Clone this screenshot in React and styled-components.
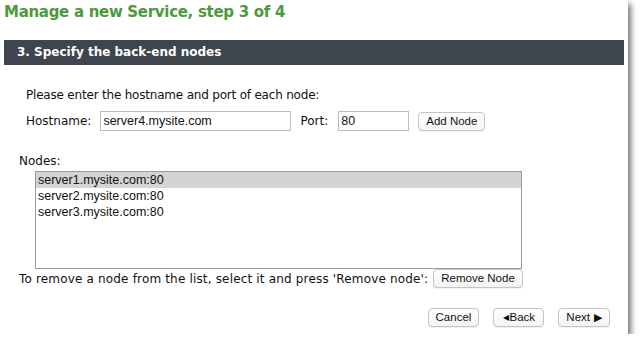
import styled, { createGlobalStyle } from 'styled-components';

const GlobalStyle = createGlobalStyle`
  body {
    margin: 0;
    background: #fff;
    font-family: "DejaVu Sans", Verdana, sans-serif;
  }
`;

const nodes = ['server1.mysite.com:80', 'server2.mysite.com:80', 'server3.mysite.com:80'];

const App = () => {
  return (
    <>
      <GlobalStyle />
      <Window>
        <Title>Manage a new Service, step 3 of 4</Title>
        <SectionBar>3. Specify the back-end nodes</SectionBar>
        <Intro>
          <Text $spacing={-0.2}>Please enter the hostname and port of each node:</Text>
          <InputRow>
            <Text>Hostname:</Text>
            <Field $width={191} defaultValue="server4.mysite.com" />
            <Text $right={1}>Port:</Text>
            <Field $width={71} defaultValue="80" />
            <Button>Add Node</Button>
          </InputRow>
        </Intro>
        <NodesLabel>Nodes:</NodesLabel>
        <NodeList>
          {nodes.map((node, i) => (
            <NodeItem key={node} $selected={i === 0}>{node}</NodeItem>
          ))}
        </NodeList>
        <RemoveRow>
          <Text $spacing={0.17}>To remove a node from the list, select it and press 'Remove node':</Text>
          <Button>Remove Node</Button>
        </RemoveRow>
        <Footer>
          <Button>Cancel</Button>
          <Button><Arrow>◀</Arrow>Back</Button>
          <Button>Next<Arrow $big>▶</Arrow></Button>
        </Footer>
      </Window>
    </>
  )
}

export default App;

const Window = styled.div`
  width: 628px;
  height: 334px;
  background: #fff;
  box-shadow: 3px 4px 6px rgba(0, 0, 0, 0.55);
  display: flex;
  flex-direction: column;
  overflow: hidden;
`;

const Title = styled.h1`
  margin: 0;
  padding: 2px 0 0 4px;
  height: 40px;
  box-sizing: border-box;
  color: #4b9a3c;
  font-family: "DejaVu Sans", Verdana, sans-serif;
  font-size: 15px;
  font-weight: 700;
  letter-spacing: -0.3px;
  line-height: 20px;
`;

const SectionBar = styled.div`
  margin: 0 4px;
  height: 25px;
  padding-left: 13px;
  background: #3e454c;
  color: #fff;
  font-family: "DejaVu Sans", Verdana, sans-serif;
  font-size: 12px;
  font-weight: 700;
  line-height: 25px;
`;

const Intro = styled.div`
  padding: 22px 0 0 26px;
  display: flex;
  flex-direction: column;
  gap: 8px;
`;

const Text = styled.span`
  color: #111;
  font-family: "DejaVu Sans", Verdana, sans-serif;
  font-size: 12px;
  line-height: 16px;
  letter-spacing: ${p => p.$spacing || 0}px;
  margin-right: ${p => p.$right || 0}px;
`;

const InputRow = styled.div`
  display: flex;
  align-items: center;
  gap: 9px;
`;

const Field = styled.input`
  width: ${p => p.$width}px;
  height: 20px;
  box-sizing: border-box;
  border: 1px solid #bdbdbd;
  padding: 0 2px;
  font-family: "Liberation Sans", Arial, sans-serif;
  font-size: 12.5px;
  color: #111;
  outline: none;
`;

const Button = styled.button`
  height: 19px;
  padding: 0 7px;
  border: 1px solid #c4c4c4;
  border-radius: 4px;
  background: linear-gradient(#fff, #f4f4f4);
  box-shadow: 0 1px 0 rgba(0, 0, 0, 0.05);
  font-family: "Liberation Sans", Arial, sans-serif;
  font-size: 11.5px;
  color: #111;
  line-height: 17px;
  display: inline-flex;
  align-items: center;
  justify-content: center;
  min-width: 51px;
`;

const Arrow = styled.span`
  font-size: ${p => (p.$big ? 11 : 8)}px;
  margin: 0 ${p => (p.$big ? 0 : 1)}px 0 ${p => (p.$big ? 4 : 0)}px;
`;

const NodesLabel = styled.div`
  margin: 22px 0 0 19px;
  color: #111;
  font-size: 12px;
  line-height: 16px;
`;

const NodeList = styled.div`
  margin: 2px 0 0 35px;
  width: 487px;
  height: 98px;
  box-sizing: border-box;
  border: 1px solid #9b9b9b;
  display: flex;
  flex-direction: column;
`;

const NodeItem = styled.div`
  height: 16px;
  padding-left: 2px;
  background: ${p => (p.$selected ? '#d4d4d4' : 'transparent')};
  color: #111;
  font-family: "Liberation Sans", Arial, sans-serif;
  font-size: 12.5px;
  line-height: 16px;
`;

const RemoveRow = styled.div`
  margin: 0 0 0 19px;
  display: flex;
  align-items: center;
  gap: 5px;
`;

const Footer = styled.div`
  margin: 20px 18px 0 0;
  display: flex;
  justify-content: flex-end;
  gap: 14px;
`;
